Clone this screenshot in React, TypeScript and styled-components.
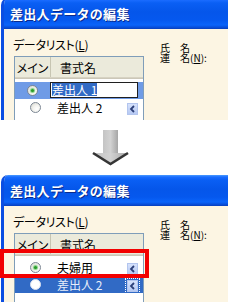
import React from "react";
import styled, { createGlobalStyle } from "styled-components";

// ----------------------------------------------------------------------------

const GlobalStyle = createGlobalStyle`
  html, body {
    margin: 0;
    padding: 0;
    background: #ffffff;
  }
  body {
    font-family: "Noto Sans CJK JP", "Noto Sans", sans-serif;
    -webkit-font-smoothing: none;
  }
`;

const Page = styled.div`
  width: 228px;
  height: 302px;
  overflow: hidden;
  display: flex;
  flex-direction: column;
  background: #ffffff;
`;

const Frame = styled.div<{ $height: number; $crop?: number }>`
  position: relative;
  flex: none;
  height: ${({ $height }) => $height}px;
  margin-top: ${({ $crop }) => -($crop || 0)}px;
`;

const Window = styled.div`
  height: 100%;
  margin-left: 1px;
  display: flex;
  flex-direction: column;
  background: #fcf5e3;
  border-left: 3px solid #0b4ee2;
  border-top-left-radius: 7px;
  overflow: hidden;
`;

const TitleBar = styled.div`
  flex: none;
  height: 31px;
  display: flex;
  align-items: center;
  padding-left: 6px;
  background: linear-gradient(
    to bottom,
    #4a9cff 0px,
    #1a6cff 2px,
    #0a5ff4 5px,
    #0556ea 14px,
    #0558ee 22px,
    #0a64fa 27px,
    #0748d0 30px,
    #0a3fb8 31px
  );
  color: #ffffff;
  font-size: 13px;
  font-weight: 700;
  letter-spacing: 0.3px;
  text-shadow: 1px 1px 0 #0a2a8c;
`;

const Body = styled.div`
  flex: 1;
  display: flex;
  padding: 9px 0 0 9px;
  min-height: 0;
`;

const LeftCol = styled.div`
  width: 131px;
  display: flex;
  flex-direction: column;
`;

const FieldLabel = styled.div`
  height: 13px;
  font-size: 12px;
  line-height: 13px;
  color: #000;
  font-feature-settings: "palt";
  letter-spacing: -0.3px;
  white-space: nowrap;

  u {
    text-decoration: underline;
    text-underline-offset: 1px;
  }
`;

const RightCol = styled.div`
  margin-left: 16px;
  padding-top: 5px;
  font-size: 10px;
  line-height: 10px;
  color: #000;
  white-space: pre;

  u {
    text-decoration: underline;
  }
`;

const ListBox = styled.div`
  margin: 5px 0 0 1px;
  width: 128px;
  flex: 1;
  border: 1px solid #7f9db9;
  border-bottom: none;
  background: #ffffff;
  display: flex;
  flex-direction: column;
`;

const Header = styled.div`
  flex: none;
  height: 20px;
  display: flex;
  align-items: center;
  background: #ebeadb;
  border-bottom: 1px solid #d6d2c2;
  box-shadow: 0 1px 0 #cbc7b8;
  font-size: 12px;
  color: #000;
  font-feature-settings: "palt";
`;

const HeaderCell = styled.div<{ $width?: number }>`
  ${({ $width }) => ($width ? `width: ${$width}px;` : "flex: 1;")}
  height: 100%;
  display: flex;
  align-items: center;
  justify-content: ${({ $width }) => ($width ? "center" : "flex-start")};
  padding-left: ${({ $width }) => ($width ? 0 : 9)}px;
  border-right: ${({ $width }) => ($width ? "1px solid #c7c5b2" : "none")};
  box-sizing: border-box;
`;

const Rows = styled.div`
  display: flex;
  flex-direction: column;
  padding-top: 4px;
`;

const Row = styled.div<{ $selected?: boolean; $soft?: boolean }>`
  flex: none;
  height: 17px;
  display: flex;
  align-items: center;
  background: ${({ $selected, $soft }) =>
    $selected ? ($soft ? "#6f9be6" : "#316ac5") : "transparent"};
  color: ${({ $selected, $soft }) => ($selected && !$soft ? "#e8eefa" : "#000")};
  font-size: 12px;
`;

const RadioCell = styled.div`
  width: 40px;
  display: flex;
  justify-content: center;
`;

const Radio = styled.span<{ $checked?: boolean; $light?: boolean }>`
  position: relative;
  width: 11px;
  height: 11px;
  box-sizing: border-box;
  border-radius: 50%;
  border: 1px solid ${({ $light }) => ($light ? "#d8e0f0" : "#7c8794")};
  background: ${({ $light }) =>
    $light
      ? "#ffffff"
      : "radial-gradient(circle at 65% 65%, #ffffff 0, #f4f4f0 40%, #d4d4cc 100%)"};

  &::after {
    content: "";
    display: ${({ $checked }) => ($checked ? "block" : "none")};
    position: absolute;
    left: 3px;
    top: 3px;
    width: 3px;
    height: 3px;
    border-radius: 50%;
    background: #2a9a2a;
    box-shadow: 0 0 1px 1px #7fd07f;
  }
`;

const NameCell = styled.div`
  flex: 1;
  height: 100%;
  display: flex;
  align-items: center;
  padding-left: 2px;
  padding-right: 5px;
  white-space: pre;
`;

const EditBox = styled.div`
  flex: none;
  margin-left: -1px;
  margin-top: -2px;
  width: 88px;
  height: 16px;
  box-sizing: border-box;
  border: 1px solid #202020;
  background: #ffffff;
  display: flex;
  align-items: center;
  padding-left: 1px;
  font-size: 12px;
  color: #000;
`;

const Selection = styled.span`
  background: #316ac5;
  color: #ffffff;
  line-height: 13px;
  white-space: pre;
`;

const ChevronButton = styled.span<{ $focused?: boolean }>`
  margin-left: auto;
  margin-top: 2px;
  width: 11px;
  height: 12px;
  box-sizing: border-box;
  display: flex;
  align-items: center;
  justify-content: center;
  background: linear-gradient(to bottom, #d6e2fc, #b6c9f3);
  border: 1px solid #b3c5ee;
  outline: ${({ $focused }) => ($focused ? "1px dotted #ffffff" : "none")};
  outline-offset: 1px;
`;

const ArrowArea = styled.div`
  flex: none;
  height: 55px;
  display: flex;
  justify-content: center;
  padding: 10px 8px 0 0;
  box-sizing: border-box;
`;

const Highlight = styled.div`
  position: absolute;
  left: 0;
  top: 74px;
  width: 149px;
  height: 29px;
  box-sizing: border-box;
  border: 4px solid #f20000;
  pointer-events: none;
`;

// ----------------------------------------------------------------------------

const Chevron = () => (
  <svg width="7" height="8" viewBox="0 0 7 8">
    <polyline
      points="5,1 2,4 5,7"
      fill="none"
      stroke="#2c3f78"
      strokeWidth="1.8"
    />
  </svg>
);

const DownArrow = () => (
  <svg width="37" height="36" viewBox="0 0 37 36">
    <defs>
      <linearGradient id="shaft" x1="0" x2="1" y1="0" y2="0">
        <stop offset="0" stopColor="#c4c4c4" />
        <stop offset="0.5" stopColor="#d2d2d2" />
        <stop offset="1" stopColor="#a6a6a6" />
      </linearGradient>
    </defs>
    <rect x="11" y="0" width="15" height="24" fill="url(#shaft)" />
    <polygon points="1,23 36,23 18.5,34" fill="url(#shaft)" />
    <polyline
      points="1,23 18.5,34 36,23"
      fill="none"
      stroke="#353535"
      strokeWidth="2.6"
      strokeLinejoin="miter"
    />
  </svg>
);

interface DialogProps {
  height: number;
  crop?: number;
  children: React.ReactNode;
  overlay?: React.ReactNode;
}

const Dialog = ({ height, crop, children, overlay }: DialogProps) => (
  <Frame $height={height} $crop={crop}>
    <Window>
      <TitleBar>差出人データの編集</TitleBar>
      <Body>
        <LeftCol>
          <FieldLabel>
            データリスト(<u>L</u>)
          </FieldLabel>
          <ListBox>
            <Header>
              <HeaderCell $width={36}>メイン</HeaderCell>
              <HeaderCell>書式名</HeaderCell>
            </Header>
            <Rows>{children}</Rows>
          </ListBox>
        </LeftCol>
        <RightCol>
          {"氏　名\n連　名("}
          <u>N</u>
          {"):"}
        </RightCol>
      </Body>
    </Window>
    {overlay}
  </Frame>
);

// ----------------------------------------------------------------------------

const App = () => {
  return (
    <Page>
      <GlobalStyle />
      <Dialog height={122} crop={2}>
        <Row $selected $soft>
          <RadioCell>
            <Radio $checked />
          </RadioCell>
          <NameCell>
            <EditBox>
              <Selection>差出人 1</Selection>
            </EditBox>
          </NameCell>
        </Row>
        <Row>
          <RadioCell>
            <Radio />
          </RadioCell>
          <NameCell>
            差出人 2
            <ChevronButton>
              <Chevron />
            </ChevronButton>
          </NameCell>
        </Row>
      </Dialog>

      <ArrowArea>
        <DownArrow />
      </ArrowArea>

      <Dialog height={127} overlay={<Highlight />}>
        <Row>
          <RadioCell>
            <Radio $checked />
          </RadioCell>
          <NameCell>
            夫婦用
            <ChevronButton>
              <Chevron />
            </ChevronButton>
          </NameCell>
        </Row>
        <Row $selected>
          <RadioCell>
            <Radio $light />
          </RadioCell>
          <NameCell>
            差出人 2
            <ChevronButton $focused>
              <Chevron />
            </ChevronButton>
          </NameCell>
        </Row>
      </Dialog>
    </Page>
  );
};

export default App;
